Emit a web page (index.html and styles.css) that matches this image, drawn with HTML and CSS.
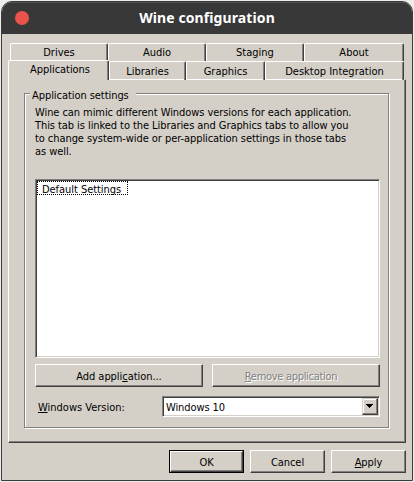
FILE: index.html
```html
<!DOCTYPE html>
<html lang="en">
<head>
<meta charset="utf-8">
<title>Wine configuration</title>
<link rel="stylesheet" href="styles.css">
</head>
<body>
<main class="window">
  <header class="titlebar"><span class="close"></span><h1>Wine configuration</h1></header>
  <div class="content">
    <nav class="tabs back">
      <div class="tab"><span>Drives</span></div><div class="tab"><span>Audio</span></div><div class="tab"><span>Staging</span></div><div class="tab"><span>About</span></div>
    </nav>
    <nav class="tabs front">
      <div class="tab selected"><span>Applications</span></div><div class="tab"><span>Libraries</span></div><div class="tab"><span>Graphics</span></div><div class="tab"><span>Desktop Integration</span></div>
    </nav>
    <section class="panel">
      <div class="group">
        <h2 class="legend">Application settings</h2>
        <p class="intro">Wine can mimic different Windows versions for each application.<br>This tab is linked to the Libraries and Graphics tabs to allow you<br>to change system-wide or per-application settings in those tabs<br>as well.</p>
        <div class="list"><div class="item">Default Settings</div></div>
        <div class="actions">
          <div class="button"><span>Add appli<u>c</u>ation...</span></div>
          <div class="button disabled"><span><u>R</u>emove application</span></div>
        </div>
        <div class="version">
          <span class="label"><u>W</u>indows Version:</span>
          <div class="combo"><span>Windows 10</span><div class="drop"><svg width="7" height="4" viewBox="0 0 7 4" shape-rendering="crispEdges"><path d="M0 0h7v1H6v1H5v1H4v1H3V3H2V2H1V1H0z"/></svg></div></div>
        </div>
      </div>
    </section>
    <footer class="footer">
      <div class="default"><div class="button"><span>OK</span></div></div>
      <div class="button"><span>Cancel</span></div>
      <div class="button"><span><u>A</u>pply</span></div>
    </footer>
  </div>
</main>
</body>
</html>
```
FILE: styles.css
```css
* { box-sizing: border-box; }
body { margin: 0; background: #ececec; font: 11px/13px "DejaVu Sans Condensed", "DejaVu Sans", sans-serif; font-stretch: condensed; color: #000; overflow: hidden; }
h1, h2, p { margin: 0; font: inherit; }
u { text-decoration: underline; text-underline-offset: 1px; text-decoration-thickness: 1px; text-decoration-skip-ink: none; }
.window { width: 412px; height: 480px; margin: 1px; background: #d4d0c8; border: 1px solid #3c3c3c; border-radius: 11px 11px 0 0; overflow: hidden; }
.titlebar { height: 32px; background: #383838; border-top: 1px solid #505050; display: flex; align-items: center; position: relative; }
.close { width: 14px; height: 14px; border-radius: 50%; background: #eb524a; margin-left: 13px; margin-top: -1px; }
h1 { position: absolute; left: 0; right: 0; top: 5px; text-align: center; color: #fff; font: bold 14px/20px "Noto Sans", sans-serif; letter-spacing: 0.1px; }
.content { padding: 9px 6px 0; }
.tabs { display: grid; }
.back { grid-template-columns: 98px 98px 98px 100px; padding-left: 2px; height: 18px; }
.front { grid-template-columns: 101px 77px 79px 139px; height: 18px; }
.tab { border-top: 1px solid #fff; border-left: 1px solid #fff; border-right: 1px solid #404040; box-shadow: inset -1px 0 #808080; border-radius: 2px 2px 0 0; display: flex; align-items: center; justify-content: center; white-space: nowrap; }
.selected { margin-top: -1px; height: 20px; background: #d4d0c8; position: relative; padding: 0 0 2px 3px; letter-spacing: -0.05px; }
.panel { width: 398px; height: 364px; padding: 13px 16px 0 15px; border: 1px solid; border-color: #fff #404040 #404040 #fff; box-shadow: inset -1px -1px #808080; }
.group { position: relative; width: 365px; height: 335px; border: 1px solid #808080; box-shadow: 1px 1px #fff, inset 1px 1px #fff; padding: 12px 9px 0 10px; }
.legend { position: absolute; left: 5px; top: -5px; width: 106px; padding-left: 2px; background: #d4d0c8; white-space: nowrap; letter-spacing: -0.06px; }
.intro { height: 73px; white-space: nowrap; letter-spacing: -0.068px; }
.list { width: 345px; height: 179px; background: #fff; border: 1px solid; border-color: #808080 #fff #fff #808080; box-shadow: inset 1px 1px #404040, inset -1px -1px #d4d0c8; padding: 1px; }
.item { width: 91px; height: 14px; border: 1px dotted #000; padding-left: 4px; line-height: 15px; white-space: nowrap; letter-spacing: -0.05px; }
.actions { display: flex; gap: 9px; margin-top: 6px; width: 345px; }
.button { width: 168px; height: 23px; padding-top: 2px; border: 1px solid; border-color: #fff #404040 #404040 #fff; box-shadow: inset -1px -1px #808080; display: flex; align-items: center; justify-content: center; white-space: nowrap; letter-spacing: -0.05px; }
.disabled { color: #808080; text-shadow: 1px 1px #fff; letter-spacing: -0.3px; padding-right: 10px; }
.version { display: flex; align-items: center; margin-top: 9px; width: 345px; justify-content: space-between; padding-left: 3px; }
.label { padding-top: 2px; }
.combo { width: 218px; height: 21px; background: #fff; border: 1px solid; border-color: #808080 #fff #fff #808080; box-shadow: inset 1px 1px #404040, inset -1px -1px #d4d0c8; padding: 1px 1px 1px 3px; display: flex; justify-content: space-between; align-items: center; }
.combo span { padding-top: 2px; letter-spacing: -0.1px; }
.drop { width: 16px; height: 17px; background: #d4d0c8; border: 1px solid; border-color: #d4d0c8 #404040 #404040 #d4d0c8; box-shadow: inset -1px -1px #808080, inset 1px 1px #fff; display: flex; align-items: center; justify-content: center; padding: 0 1px 1px 0; }
.footer { display: flex; justify-content: flex-end; gap: 6px; margin-top: 7px; width: 398px; }
.footer .button { width: 75px; }
.default { border: 1px solid #000; width: 75px; height: 23px; }
.footer .default .button { width: 73px; height: 21px; }
```
